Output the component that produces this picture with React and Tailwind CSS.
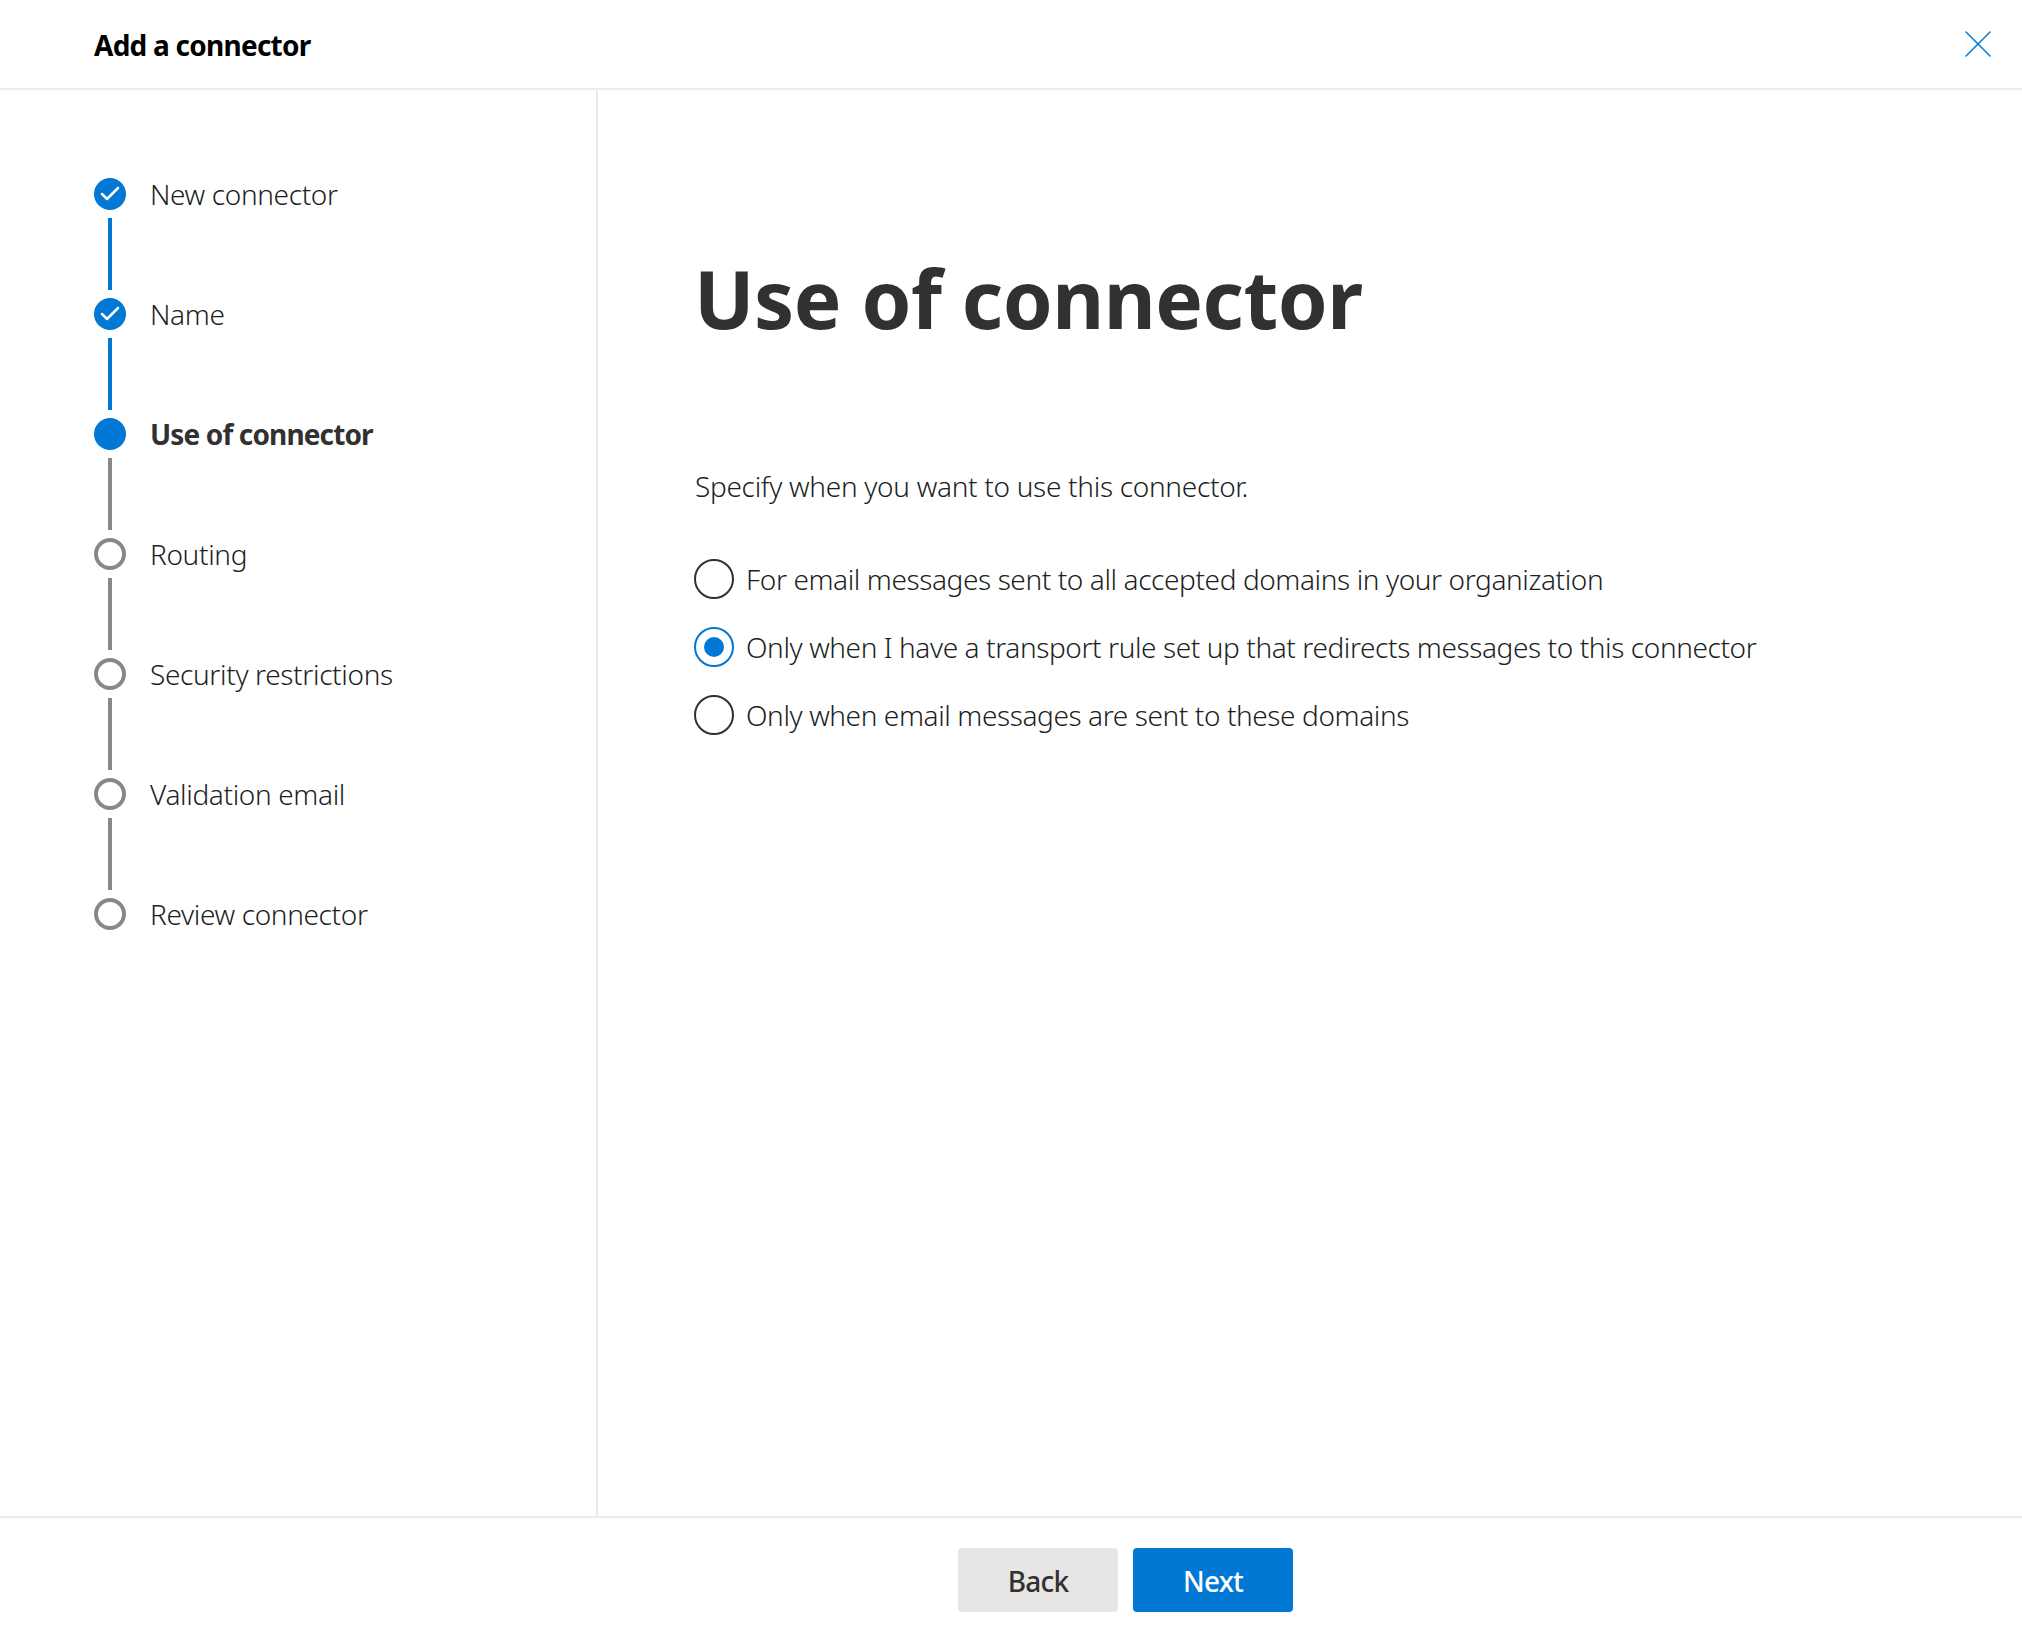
import { X, Check } from "lucide-react";

const steps = [
  { label: "New connector", state: "done" },
  { label: "Name", state: "done" },
  { label: "Use of connector", state: "current" },
  { label: "Routing", state: "todo" },
  { label: "Security restrictions", state: "todo" },
  { label: "Validation email", state: "todo" },
  { label: "Review connector", state: "todo" },
];

const options = [
  { label: "For email messages sent to all accepted domains in your organization", checked: false },
  { label: "Only when I have a transport rule set up that redirects messages to this connector", checked: true },
  { label: "Only when email messages are sent to these domains", checked: false },
];

const StepDot = ({ state }) => {
  if (state === "done") {
    return (
      <div className="w-8 h-8 rounded-full bg-[#0078d4] flex items-center justify-center">
        <Check className="w-6 h-6 text-white" strokeWidth={2.5} />
      </div>
    );
  }
  if (state === "current") {
    return <div className="w-8 h-8 rounded-full bg-[#0078d4]" />;
  }
  return <div className="w-8 h-8 rounded-full border-4 border-[#8a8886] bg-white" />;
};

const App = () => {
  return (
    <div className="h-[1642px] flex flex-col bg-white text-[#323130] font-['Noto_Sans','Open_Sans',sans-serif]">
      <header className="h-[90px] shrink-0 flex items-center justify-between border-b-2 border-[#edebe9] pl-[94px] pr-[20px]">
        <h2 className="text-[28px] leading-[40px] mt-[2px] font-bold text-black tracking-[-0.75px]">Add a connector</h2>
        <X className="w-12 h-12 text-[#0078d4]" strokeWidth={0.75} />
      </header>

      <main className="flex-1 flex min-h-0">
        <aside className="w-[598px] shrink-0 border-r-2 border-[#edebe9] pl-[94px] pt-[88px]">
          {steps.map((step, idx) => (
            <div key={step.label}>
              <div className="flex items-center h-8 gap-[24px]">
                <StepDot state={step.state} />
                <span className={`text-[28px] -mt-[1px] ${step.state === "current" ? "font-bold tracking-[-0.86px]" : "font-light text-[#201f1e] tracking-[-0.35px]"}`}>
                  {step.label}
                </span>
              </div>
              {idx < steps.length - 1 && (
                <div
                  className={`w-1 h-[72px] my-2 ml-[14px] ${
                    step.state === "todo" || step.state === "current" ? "bg-[#8a8886]" : "bg-[#0078d4]"
                  }`}
                />
              )}
            </div>
          ))}
        </aside>

        <section className="flex-1 pl-[96px] pt-[158px]">
          <h1 className="text-[80px] leading-[100px] font-bold tracking-[-0.45px]">Use of connector</h1>
          <p className="ml-[1px] mt-[119px] text-[28px] leading-[38px] font-light text-[#201f1e] tracking-[-0.3px]">Specify when you want to use this connector.</p>
          <div className="mt-[54px] flex flex-col gap-[28px]">
            {options.map((opt) => (
              <label key={opt.label} className="flex items-center gap-[12px] h-10">
                <span
                  className={`w-10 h-10 shrink-0 rounded-full border-2 flex items-center justify-center ${
                    opt.checked ? "border-[#0078d4]" : "border-[#323130]"
                  }`}
                >
                  {opt.checked && <span className="w-5 h-5 rounded-full bg-[#0078d4]" />}
                </span>
                <span className="text-[28px] -mt-[1px] font-light text-[#201f1e] tracking-[-0.4px]">{opt.label}</span>
              </label>
            ))}
          </div>
        </section>
      </main>

      <footer className="h-[126px] shrink-0 border-t-2 border-[#edebe9] pl-[958px] pt-[30px] flex items-start gap-[15px]">
        <button className="w-[160px] h-[64px] pt-[1px] rounded bg-[#e7e6e5] text-[28px] font-medium tracking-[-0.8px]">Back</button>
        <button className="w-[160px] h-[64px] pt-[1px] rounded bg-[#0078d4] text-white text-[28px] font-medium tracking-[-0.8px]">Next</button>
      </footer>
    </div>
  );
};

export default App;
